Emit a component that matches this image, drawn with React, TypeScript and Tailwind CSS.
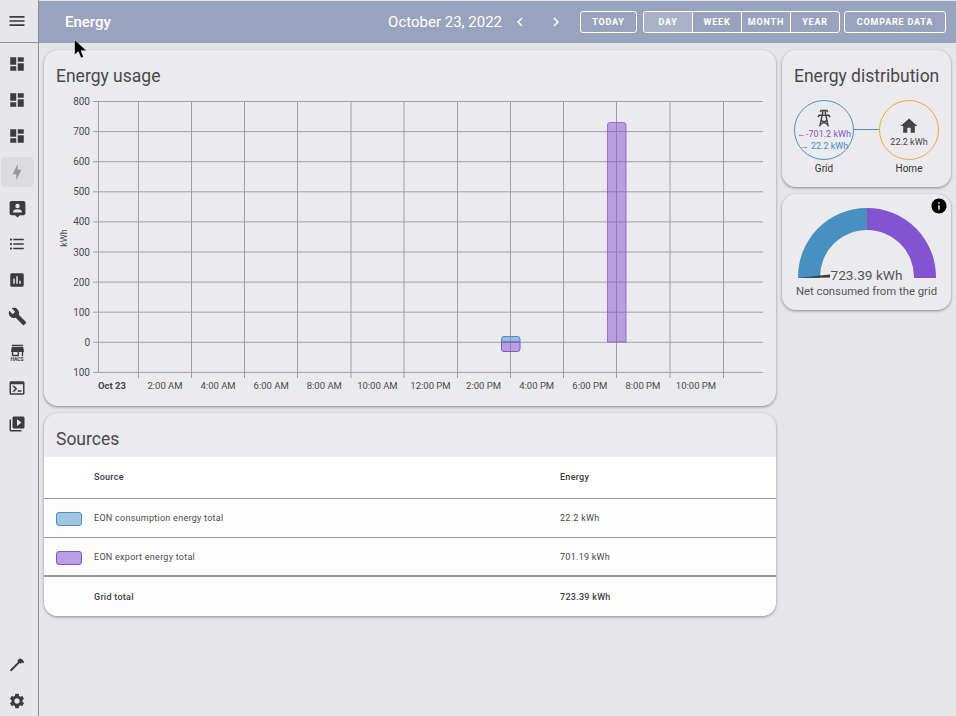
import { MdDashboard, MdMenu, MdFormatListBulleted, MdInsertChart, MdBuild, MdStore, MdVideoLibrary, MdSettings, MdHome, MdInfo, MdChevronLeft, MdChevronRight } from "react-icons/md";

const VERTICALS = [138.5, 191.5, 244.5, 297.5, 351, 404, 457.5, 510.5, 563.5, 616.5, 670, 723.5];
const HOURS = ["2:00 AM", "4:00 AM", "6:00 AM", "8:00 AM", "10:00 AM", "12:00 PM", "2:00 PM", "4:00 PM", "6:00 PM", "8:00 PM", "10:00 PM"];
const Y_LABELS = ["800", "700", "600", "500", "400", "300", "200", "100", "0", "100"];

const GRID = "#a0a0a2";

function ConsoleIcon() {
  return (
    <svg viewBox="0 0 24 24" className="size-[18px]" fill="currentColor">
      <path d="M20,19V7H4V19H20M20,3A2,2 0 0,1 22,5V19A2,2 0 0,1 20,21H4A2,2 0 0,1 2,19V5C2,3.89 2.9,3 4,3H20M13,17V15H18V17H13M9.58,13L5.57,9H8.4L11.7,12.3C12.09,12.69 12.09,13.33 11.7,13.72L8.42,17H5.59L9.58,13Z" />
    </svg>
  );
}

function HammerIcon() {
  return (
    <svg viewBox="0 0 24 24" className="size-[18px]" fill="currentColor">
      <path d="M2.5 20.1 13.6 9l-1.3-1.3 2.6-2.7c1.6-.6 3.7.2 5.6 2.6l1 2-1.5 1.5-1.3-1.1-1.8 1.8-1.4-1.3L4.4 22z" />
    </svg>
  );
}

function BoltIcon() {
  return (
    <svg viewBox="0 0 24 24" className="size-[18px]" fill="currentColor">
      <path d="M11 15H6L13 1V9H18L11 23V15Z" />
    </svg>
  );
}

/* rounded box with a person and a small pointer under it */
function PersonBoxIcon() {
  return (
    <svg viewBox="0 0 24 24" className="size-[19px]" fill="currentColor">
      <path fillRule="evenodd" d="M4.500 2.500h15a2.500 2.500 0 0 1 2.500 2.500v13a2.500 2.500 0 0 1-2.500 2.500H15l-3 3-3-3H4.500A2.500 2.500 0 0 1 2 18V5a2.500 2.500 0 0 1 2.500-2.500zM12 6a2.800 2.800 0 1 0 0 5.600A2.800 2.800 0 0 0 12 6zM6.500 17h11v-1.200c0-1.900-3.700-2.800-5.500-2.800s-5.500.900-5.500 2.800z" />
    </svg>
  );
}

function TowerIcon() {
  return (
    <svg viewBox="0 0 24 24" className="size-[20px]" fill="none" stroke="currentColor" strokeWidth="1.800">
      <path d="M7.400 5 8.500 3h7l1.100 2" />
      <path d="M5 11l1-2.200h12l1 2.200" />
      <path d="M10.800 3.500 7 22M13.200 3.500 17 22M8.500 19.500 15.500 14.500M15.500 19.500 8.500 14.500" />
    </svg>
  );
}

function Sidebar() {
  return (
    <aside className="flex h-full w-[39px] shrink-0 flex-col border-r border-[#8f8f92] bg-[#e6e6eb] text-[#3c3c40]">
      <div className="flex h-[43px] shrink-0 items-center justify-center border-b border-[#8f8f92] pr-[4px]">
        <MdMenu className="size-[20px]" />
      </div>
      <div className="flex flex-1 flex-col items-center pr-[4px] pt-[3px]">
        <div className="flex h-[36px] items-center justify-center"><MdDashboard className="size-[18px]" /></div>
        <div className="flex h-[36px] items-center justify-center"><MdDashboard className="size-[18px]" /></div>
        <div className="flex h-[36px] items-center justify-center"><MdDashboard className="size-[18px]" /></div>
        <div className="my-[3px] flex h-[30px] w-[33px] items-center justify-center rounded-[5px] bg-[#dcdce0] text-[#98989c]"><BoltIcon /></div>
        <div className="flex h-[36px] items-center justify-center"><PersonBoxIcon /></div>
        <div className="flex h-[36px] items-center justify-center"><MdFormatListBulleted className="size-[18px]" /></div>
        <div className="flex h-[36px] items-center justify-center"><MdInsertChart className="size-[18px]" /></div>
        <div className="flex h-[36px] items-center justify-center"><MdBuild className="size-[19px]" /></div>
        <div className="flex h-[36px] flex-col items-center justify-center">
          <MdStore className="-mb-[3px] size-[17px]" />
          <span className="text-[5px] font-bold leading-[6px]">HACS</span>
        </div>
        <div className="flex h-[36px] items-center justify-center"><ConsoleIcon /></div>
        <div className="flex h-[36px] items-center justify-center"><MdVideoLibrary className="size-[18px]" /></div>
        <div className="mb-[4px] mt-auto flex h-[36px] items-center justify-center"><HammerIcon /></div>
        <div className="flex h-[30px] items-center justify-center"><MdSettings className="size-[18px]" /></div>
      </div>
    </aside>
  );
}

function Header() {
  const btn = "flex h-full items-center justify-center pt-[1px] text-[9px] font-bold tracking-[0.09em] text-white";
  return (
    <header className="mt-[1px] flex h-[42px] shrink-0 items-center bg-[#9aa3bd] pl-[26px] pr-[10px] text-white">
      <h1 className="text-[15px] font-medium">Energy</h1>
      <span className="ml-auto text-[15px] text-white">October 23, 2022</span>
      <MdChevronLeft className="ml-[9px] size-[18px]" />
      <MdChevronRight className="ml-[18px] size-[18px]" />
      <div className="ml-[15px] flex h-[22px] items-stretch">
        <button className={`${btn} w-[57px] rounded-[3px] border border-white`}>TODAY</button>
        <div className="ml-[6px] flex w-[197px] overflow-hidden rounded-[3px] border border-white">
          <button className={`${btn} flex-1 border-r border-white bg-[#aab2c9] text-[#f0f1f5]`}>DAY</button>
          <button className={`${btn} flex-1 border-r border-white`}>WEEK</button>
          <button className={`${btn} flex-1 border-r border-white`}>MONTH</button>
          <button className={`${btn} flex-1`}>YEAR</button>
        </div>
        <button className={`${btn} ml-[4px] w-[102px] rounded-[3px] border border-white`}>COMPARE DATA</button>
      </div>
    </header>
  );
}

function UsageChart() {
  const ys = Y_LABELS.map((_, i) => 101.5 + i * 30.1);
  return (
    <svg viewBox="44 90 732 300" className="block h-[300px] w-[732px]">
      {ys.map((y) => (
        <line key={y} x1="93" x2="763" y1={y} y2={y} stroke={GRID} />
      ))}
      <line x1="98.500" x2="98.500" y1="101" y2="372" stroke={GRID} />
      {VERTICALS.map((x) => (
        <line key={x} x1={x} x2={x} y1="101" y2="378" stroke={GRID} />
      ))}
      {Y_LABELS.map((t, i) => (
        <text key={i} x="90" y={ys[i] + 3.500} textAnchor="end" fontSize="10" fill="#4a4a4e">{t}</text>
      ))}
      <text transform="translate(67 238) rotate(-90)" textAnchor="middle" fontSize="9" fill="#4a4a4e">kWh</text>
      <text x="112" y="389" textAnchor="middle" fontSize="9.500" fontWeight="700" fill="#444448">Oct 23</text>
      {HOURS.map((t, i) => (
        <text key={t} x={165 + i * 53.100} y="389" textAnchor="middle" fontSize="9.500" fill="#4a4a4e">{t}</text>
      ))}
      <path d="M607.500 342V125a2.500 2.500 0 0 1 2.500-2.500h13.500a2.500 2.500 0 0 1 2.500 2.500V342z" fill="#8353d1" fillOpacity="0.5" stroke="#8353d1" strokeOpacity="0.75" />
      <path d="M501.500 342v-3a2.500 2.500 0 0 1 2.500-2.500h13.500a2.500 2.500 0 0 1 2.500 2.500v3z" fill="#488fc2" fillOpacity="0.5" stroke="#488fc2" />
      <path d="M501.500 342v7a2.500 2.500 0 0 0 2.500 2.500h13.500a2.500 2.500 0 0 0 2.500-2.500v-7z" fill="#8353d1" fillOpacity="0.5" stroke="#8353d1" />
    </svg>
  );
}

function SourcesTable() {
  const rows = [
    { name: "EON consumption energy total", value: "22.2 kWh", swatch: "border-[#4a8dbf] bg-[#a0c5e0]" },
    { name: "EON export energy total", value: "701.19 kWh", swatch: "border-[#7f55c9] bg-[#b9a0e2]" },
  ];
  return (
    <div className="overflow-hidden rounded-b-[14px] bg-[#fdfdfd] text-[9px] tracking-[0.03em] text-[#4a4a4e]">
      <div className="grid h-[42px] grid-cols-[50px_466px_1fr] items-center border-b border-[#98989b] bg-white font-medium text-[#3a3a3e]">
        <span />
        <span>Source</span>
        <span>Energy</span>
      </div>
      {rows.map((r, i) => (
        <div key={r.name} className={`grid h-[39px] grid-cols-[50px_466px_1fr] items-center border-[#98989b] ${i === 0 ? "border-b pt-[1px]" : "border-b-2 pt-[2px]"}`}>
          <span className={`ml-[12px] h-[14px] w-[26px] rounded-[3px] border ${r.swatch}`} />
          <span>{r.name}</span>
          <span>{r.value}</span>
        </div>
      ))}
      <div className="grid h-[39px] grid-cols-[50px_466px_1fr] items-center pt-[2px] font-medium text-[#3f3f43]">
        <span />
        <span>Grid total</span>
        <span>723.39 kWh</span>
      </div>
    </div>
  );
}

function Distribution() {
  return (
    <section className="h-[137px] rounded-[14px] bg-[#ebebee] px-[12px] shadow-[0_1px_3px_rgba(0,0,0,0.4)]">
      <h2 className="whitespace-nowrap pt-[13px] text-center text-[17.500px] leading-[26px] text-[#48484c]">Energy distribution</h2>
      <div className="mt-[11px] flex items-start text-[10px]">
        <div className="flex w-[60px] flex-col items-center">
          <div className="flex h-[60px] w-[60px] flex-col items-center rounded-full border border-[#488fc2] pt-[7px] text-[#44444a]">
            <TowerIcon />
            <span className="whitespace-nowrap text-[9px] leading-[12px] text-[#8353d1]"><span className="font-['Liberation_Sans']">←</span>-701.2 kWh</span>
            <span className="whitespace-nowrap text-[9px] leading-[12px] text-[#488fc2]"><span className="font-['Liberation_Sans']">→</span> 22.2 kWh</span>
          </div>
          <span className="mt-px text-[#333337]">Grid</span>
        </div>
        <div className="mt-[29px] h-px w-[25px] bg-[#488fc2]" />
        <div className="flex w-[60px] flex-col items-center">
          <div className="flex h-[60px] w-[60px] flex-col items-center rounded-full border border-[#f2a73b] pt-[15px] text-[#44444a]">
            <MdHome className="size-[20px]" />
            <span className="whitespace-nowrap text-[9px] leading-[12px]">22.2 kWh</span>
          </div>
          <span className="mt-px text-[#333337]">Home</span>
        </div>
      </div>
    </section>
  );
}

function Gauge() {
  return (
    <section className="relative mt-[7px] h-[116px] rounded-[14px] bg-[#ebebee] shadow-[0_1px_3px_rgba(0,0,0,0.4)]">
      <MdInfo className="absolute right-[3px] top-[3px] size-[18px] text-black" />
      <svg viewBox="782 194 169 116" className="block h-[116px] w-[169px]">
        <path d="M798 278a69 69 0 0 1 69-70v22a47 47 0 0 0-47 48z" fill="#488fc2" />
        <path d="M867 208a69 69 0 0 1 69 70h-22a47 47 0 0 0-47-48z" fill="#8353d1" />
        <path d="M798 278 830 274.500V277.500z" fill="#38383c" />
        <text x="866.500" y="279.500" textAnchor="middle" fontSize="13.700" fill="#55555a">723.39 kWh</text>
        <text x="866.500" y="295" textAnchor="middle" fontSize="11.300" fill="#55555a">Net consumed from the grid</text>
      </svg>
    </section>
  );
}

export default function App() {
  return (
    <div className="relative flex h-[716px] w-[956px] overflow-hidden bg-[#e5e5ea] font-['Roboto',sans-serif]">
      <Sidebar />
      <main className="flex min-w-0 flex-1 flex-col">
        <Header />
        <div className="flex gap-[6px] pl-[5px] pt-[7px]">
          <div className="flex w-[732px] shrink-0 flex-col gap-[7px]">
            <section className="h-[356px] rounded-[14px] bg-[#ebebee] shadow-[0_1px_3px_rgba(0,0,0,0.4)]">
              <h2 className="px-[12px] pb-[4px] pt-[16px] text-[17.500px] leading-[20px] text-[#48484c]">Energy usage</h2>
              <UsageChart />
            </section>
            <section className="rounded-[14px] bg-[#ebebee] shadow-[0_1px_3px_rgba(0,0,0,0.4)]">
              <h2 className="h-[44px] px-[12px] pt-[15px] text-[17.500px] leading-[22px] text-[#48484c]">Sources</h2>
              <SourcesTable />
            </section>
          </div>
          <div className="flex w-[169px] shrink-0 flex-col">
            <Distribution />
            <Gauge />
          </div>
        </div>
      </main>
      {/* mouse pointer caught in the capture */}
      <svg viewBox="0 0 14 20" className="absolute left-[74px] top-[39px] h-[20px] w-[14px]">
        <path d="M0.500 0.500V16L4.300 12.500 7 19 9.500 18 7 11.800H12.500z" fill="#000" stroke="#fff" strokeWidth="0.500" />
      </svg>
    </div>
  );
}
